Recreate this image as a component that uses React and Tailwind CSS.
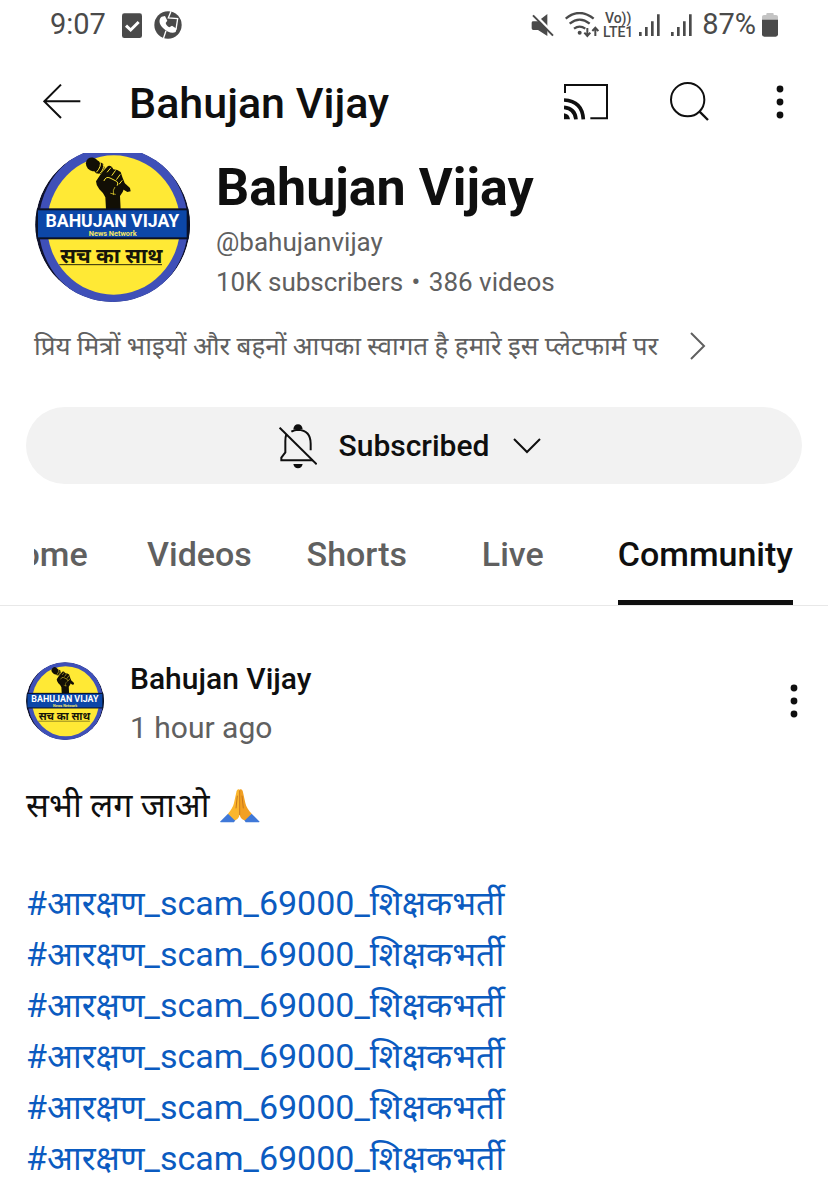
import React, { useState } from 'react';

const CHANNEL = 'Bahujan Vijay';

const TABS = ['Home', 'Videos', 'Shorts', 'Live', 'Community'];

const HASHTAGS = Array(6).fill('#आरक्षण_scam_69000_शिक्षकभर्ती');

const ChannelLogo = ({ viewBox, className }) => (
    <svg viewBox={viewBox} className={className} role="img" aria-label={CHANNEL}>
        <defs>
            <clipPath id="logo-round"><circle cx="278" cy="254" r="232" /></clipPath>
        </defs>
        <g clipPath="url(#logo-round)">
            <circle cx="278" cy="254" r="232" fill="#10122c" />
            <ellipse cx="280" cy="254" rx="224" ry="238" fill="#3f50b8" />
            <ellipse cx="281" cy="255" rx="200" ry="209" fill="#ffe935" />
            {/* raised fist with microphone */}
            <g transform="translate(174 30)">
                <g fill="#120f05">
                    <path d="M84 178l-2-36q-6-14-18-24-10-12-10-24l12-18 10-14 14-14q10-4 16 10l12 2 10 6 6 18 5 12 1 14-6 16-8 12 2 40z" />
                    <path d="M134 94l22 20 2 10-10 2-16-10z" />
                    <ellipse cx="44" cy="43" rx="19" ry="22" transform="rotate(-40 44 43)" />
                    <path d="M60 32l16 10 4 12-12 18-14-2-6-8z" />
                </g>
                <g fill="none" stroke="#ffe935" strokeWidth="3" strokeLinecap="round">
                    <path d="M66 34q6 14-10 32M76 44q4 12-10 26" />
                    <path d="M88 66l10-12M102 76l10-14M116 88l10-14M124 102l8-10" />
                    <path d="M78 92q6-14 18-8l20 10q6 4 2 12" />
                    <path d="M110 112q-6 6-4 22M98 130l14 3" strokeWidth="2" />
                </g>
            </g>
            <rect x="40" y="205" width="476" height="93" fill="#0a1128" />
            <rect x="54" y="211" width="446" height="81" fill="#0c47a8" />
            <text x="277" y="262" textAnchor="middle" fontSize="53" className="fill-white font-bold">BAHUJAN VIJAY</text>
            <text x="278" y="289" textAnchor="middle" fontSize="22" className="fill-[#f5e663] font-bold">News Network</text>
            <text x="274" y="368" textAnchor="middle" fontSize="64" className="fill-[#16150a] font-bold">सच का साथ</text>
            <path d="M118 374h308" stroke="#2a280c" strokeWidth="3" />
        </g>
    </svg>
);

const SignalBars = () => (
    <svg viewBox="385 42 63 69" className="h-[23px] w-[21px]" stroke="#4a4a4a" strokeWidth="8" aria-hidden="true">
        <path d="M389 96v12M407 81v27M425 64v44M443 43v65" />
    </svg>
);

const MoreIcon = () => (
    <svg viewBox="0 0 8 34" className="h-[34px] w-2" fill="#0f0f0f" aria-hidden="true">
        <circle cx="4" cy="4" r="3.4" />
        <circle cx="4" cy="17" r="3.4" />
        <circle cx="4" cy="30" r="3.4" />
    </svg>
);

const FoldedHands = () => (
    <svg viewBox="634 58 120 102" className="h-[34px] w-10" role="img" aria-label="folded hands">
        <path d="M634 156l24-24 26 14-8 12h-40zM753 156l-24-24-26 14 8 12h40z" fill="#3f78d8" />
        <path d="M693 60c-6-3-9 2-10 8l-7 32c-2 10-10 23-18 32l20 20c8-2 15-10 15-20z" fill="#fbb62d" />
        <path d="M693 60c6-3 9 2 10 8l7 32c2 10 10 23 19 32l-20 20c-9-2-16-10-16-20z" fill="#f2a022" />
        <path d="M693 62v74M686 78l-4 38M700 78l4 38" fill="none" stroke="#c9781c" strokeWidth="3" />
    </svg>
);

const StatusBar = () => (
    <div className="flex h-[50px] items-center justify-between px-[50px] text-[29px] text-[#4a4a4a]">
        <div className="flex items-center">
            <span>9:07</span>
            <svg viewBox="273 36 60 75" className="ml-4 h-[25px] w-5" aria-hidden="true">
                <rect x="273" y="37" width="60" height="74" rx="7" fill="#4a4a4a" />
                <path d="M285 74l14 13 24-24" fill="none" stroke="#fff" strokeWidth="9" />
            </svg>
            <svg viewBox="369 33 84 84" className="ml-3 size-7" aria-hidden="true">
                <circle cx="411" cy="75" r="41" fill="#4a4a4a" />
                <path d="M420 34l-8 20 28 2-5 32M405 92l-8 24" fill="none" stroke="#fff" strokeWidth="4" />
                <path d="M392 50c-10 8-8 22 4 34s28 18 38 12l3-10-14-9-8 5c-6-3-9-7-11-13l5-7-7-14z" fill="#fff" />
            </svg>
        </div>
        <div className="flex items-center">
            <svg viewBox="60 39 72 72" className="size-6" aria-hidden="true">
                <path d="M62 68q0-4 5-4h14l28-22v66L81 90H67q-5 0-5-5z" fill="#4a4a4a" />
                <path d="M70 42l58 60" stroke="#fff" strokeWidth="8" />
                <path d="M66 46l60 61" stroke="#4a4a4a" strokeWidth="6" />
            </svg>
            <svg viewBox="162 36 102 78" className="ml-2.5 h-[26px] w-[34px]" fill="none" stroke="#4a4a4a" strokeWidth="7" aria-hidden="true">
                <path d="M164 56q41-34 84 0M176 71q30-24 60 0M189 86q17-12 34 0" />
                <circle cx="206" cy="98" r="6" fill="#4a4a4a" stroke="none" />
                <path d="M229 84v22M220 98l9 10 9-10M253 108V84M244 93l9-10 9 10" strokeWidth="6" />
            </svg>
            <span className="ml-1 flex w-[30px] flex-col items-center text-[14px] leading-[14px] font-medium">
                <span>Vo))</span>
                <span>LTE1</span>
            </span>
            <span className="ml-1.5 flex gap-[11px]">
                <SignalBars />
                <SignalBars />
            </span>
            <span className="ml-2.5">87%</span>
            <svg viewBox="756 39 48 72" className="ml-1.5 h-6 w-4" aria-hidden="true">
                <path d="M756 62V50q0-5 6-5h7v-4q0-2 3-2h16q3 0 3 2v4h7q6 0 6 5v12z" fill="#c4c4c4" />
                <path d="M756 59h48v44q0 7-7 7h-34q-7 0-7-7z" fill="#4a4a4a" />
            </svg>
        </div>
    </div>
);

const TopBar = () => (
    <header className="flex h-[103px] items-center pr-11 pl-[43px] text-[#0f0f0f]">
        <button type="button" aria-label="Back">
            <svg viewBox="68 70 114 105" className="h-[35px] w-[38px]" fill="none" stroke="#0f0f0f" strokeWidth="6" aria-hidden="true">
                <path d="M180 122H72M122 72l-50 50 50 50" />
            </svg>
        </button>
        <h1 className="ml-12 flex-1 pt-1 text-[43px] font-medium">{CHANNEL}</h1>
        <button type="button" aria-label="Cast">
            <svg viewBox="72 55 132 108" className="h-9 w-11" fill="none" stroke="#0f0f0f" aria-hidden="true">
                <path d="M75 82V58h126v100h-50" strokeWidth="6" />
                <path d="M72 103q55 3 58 58M72 125q33 3 36 36" strokeWidth="11" />
                <path d="M72 143q16 2 18 18H72z" fill="#0f0f0f" stroke="none" />
            </svg>
        </button>
        <button type="button" aria-label="Search" className="ml-[62px]">
            <svg viewBox="390 50 117 117" className="size-[39px]" fill="none" stroke="#0f0f0f" strokeWidth="6" aria-hidden="true">
                <circle cx="443" cy="103" r="50" />
                <path d="M478 138l26 26" strokeWidth="7" />
            </svg>
        </button>
        <button type="button" aria-label="More options" className="ml-[67px]">
            <MoreIcon />
        </button>
    </header>
);

const ChannelInfo = () => (
    <section>
        <div className="flex items-start pl-[35px]">
            <ChannelLogo viewBox="45 39 465 447" className="h-[149px] w-[155px] shrink-0" />
            <div className="ml-[26px] text-[26px] leading-10 text-[#606060]">
                <h2 className="text-[52px] leading-[69px] font-bold text-[#0f0f0f]">{CHANNEL}</h2>
                <p>@bahujanvijay</p>
                <p>10K subscribers <span className="mx-0.5">•</span> 386 videos</p>
            </div>
        </div>
        <a href="#about" className="mt-6 flex h-10 items-center gap-8 pl-[34px] text-[26px] text-[#606060]">
            <span>प्रिय मित्रों भाइयों और बहनों आपका स्वागत है हमारे इस प्लेटफार्म पर</span>
            <svg viewBox="0 0 16 28" className="h-7 w-4" fill="none" stroke="#606060" strokeWidth="2" aria-hidden="true">
                <path d="M1 1l13 13L1 27" />
            </svg>
        </a>
        <div className="px-[26px] pt-[41px]">
            <button type="button" className="flex h-[77px] w-full items-center justify-center rounded-full bg-[#f2f2f2] pr-2 text-[30px] font-medium text-[#0f0f0f]">
                <svg viewBox="60 66 114 138" className="h-[46px] w-[38px]" fill="none" stroke="#0f0f0f" strokeWidth="6" aria-hidden="true">
                    <path d="M62 80l111 110" />
                    <path d="M97 92q10-6 20-6 38 2 38 42v20M82 100q-3 8-3 20v34l-12 16v8h95" />
                    <path d="M103 85q2-15 14-15t14 15zM103 189h28q-3 13-14 13t-14-13z" fill="#0f0f0f" stroke="none" />
                </svg>
                <span className="ml-[22px]">Subscribed</span>
                <svg viewBox="0 0 28 16" className="ml-6 h-4 w-7" fill="none" stroke="#0f0f0f" strokeWidth="2" aria-hidden="true">
                    <path d="M1 1l13 13L27 1" />
                </svg>
            </button>
        </div>
    </section>
);

const Tabs = () => {
    const [active, setActive] = useState('Community');

    return (
        <div className="mt-5 border-b border-[#e8e8e8]">
            <nav className="mr-2 ml-[34px] flex justify-end overflow-hidden text-[34px] font-medium">
                {TABS.map(tab => (
                    <a
                        key={tab}
                        href={`#${tab.toLowerCase()}`}
                        onClick={() => setActive(tab)}
                        className={`flex h-[101px] min-w-[156px] shrink-0 justify-center px-[27px] ${tab === active ? 'text-[#0f0f0f]' : 'text-[#606060]'}`}
                    >
                        <span className={`flex items-center border-y-[5px] border-t-transparent ${tab === active ? 'border-b-[#0f0f0f]' : 'border-b-transparent'}`}>
                            {tab}
                        </span>
                    </a>
                ))}
            </nav>
        </div>
    );
};

const Post = () => (
    <article className="px-[26px] pt-12">
        <div className="flex items-start">
            <ChannelLogo viewBox="45 21 465 465" className="mt-2 size-[78px] shrink-0" />
            <div className="ml-[26px] flex-1 text-[30px] leading-[49px]">
                <h3 className="font-medium text-[#0f0f0f]">{CHANNEL}</h3>
                <p className="text-[#606060]">1 hour ago</p>
            </div>
            <button type="button" aria-label="Post options" className="mt-2 mr-1 h-[78px]">
                <MoreIcon />
            </button>
        </div>
        <p className="mt-7 flex items-center gap-2.5 text-[34px] leading-[51px] text-[#0f0f0f]">
            सभी लग जाओ
            <FoldedHands />
        </p>
        <ul className="mt-[47px] text-[34px] leading-[51px] text-[#0b5bc0]">
            {HASHTAGS.map((tag, i) => (
                <li key={i}><a href="#hashtag">{tag}</a></li>
            ))}
        </ul>
    </article>
);

const App = () => (
    <div className="min-h-screen overflow-hidden bg-white font-[Roboto,'Noto_Sans_Devanagari','Noto_Sans',sans-serif]">
        <StatusBar />
        <TopBar />
        <main>
            <ChannelInfo />
            <Tabs />
            <Post />
        </main>
    </div>
);

export default App;
